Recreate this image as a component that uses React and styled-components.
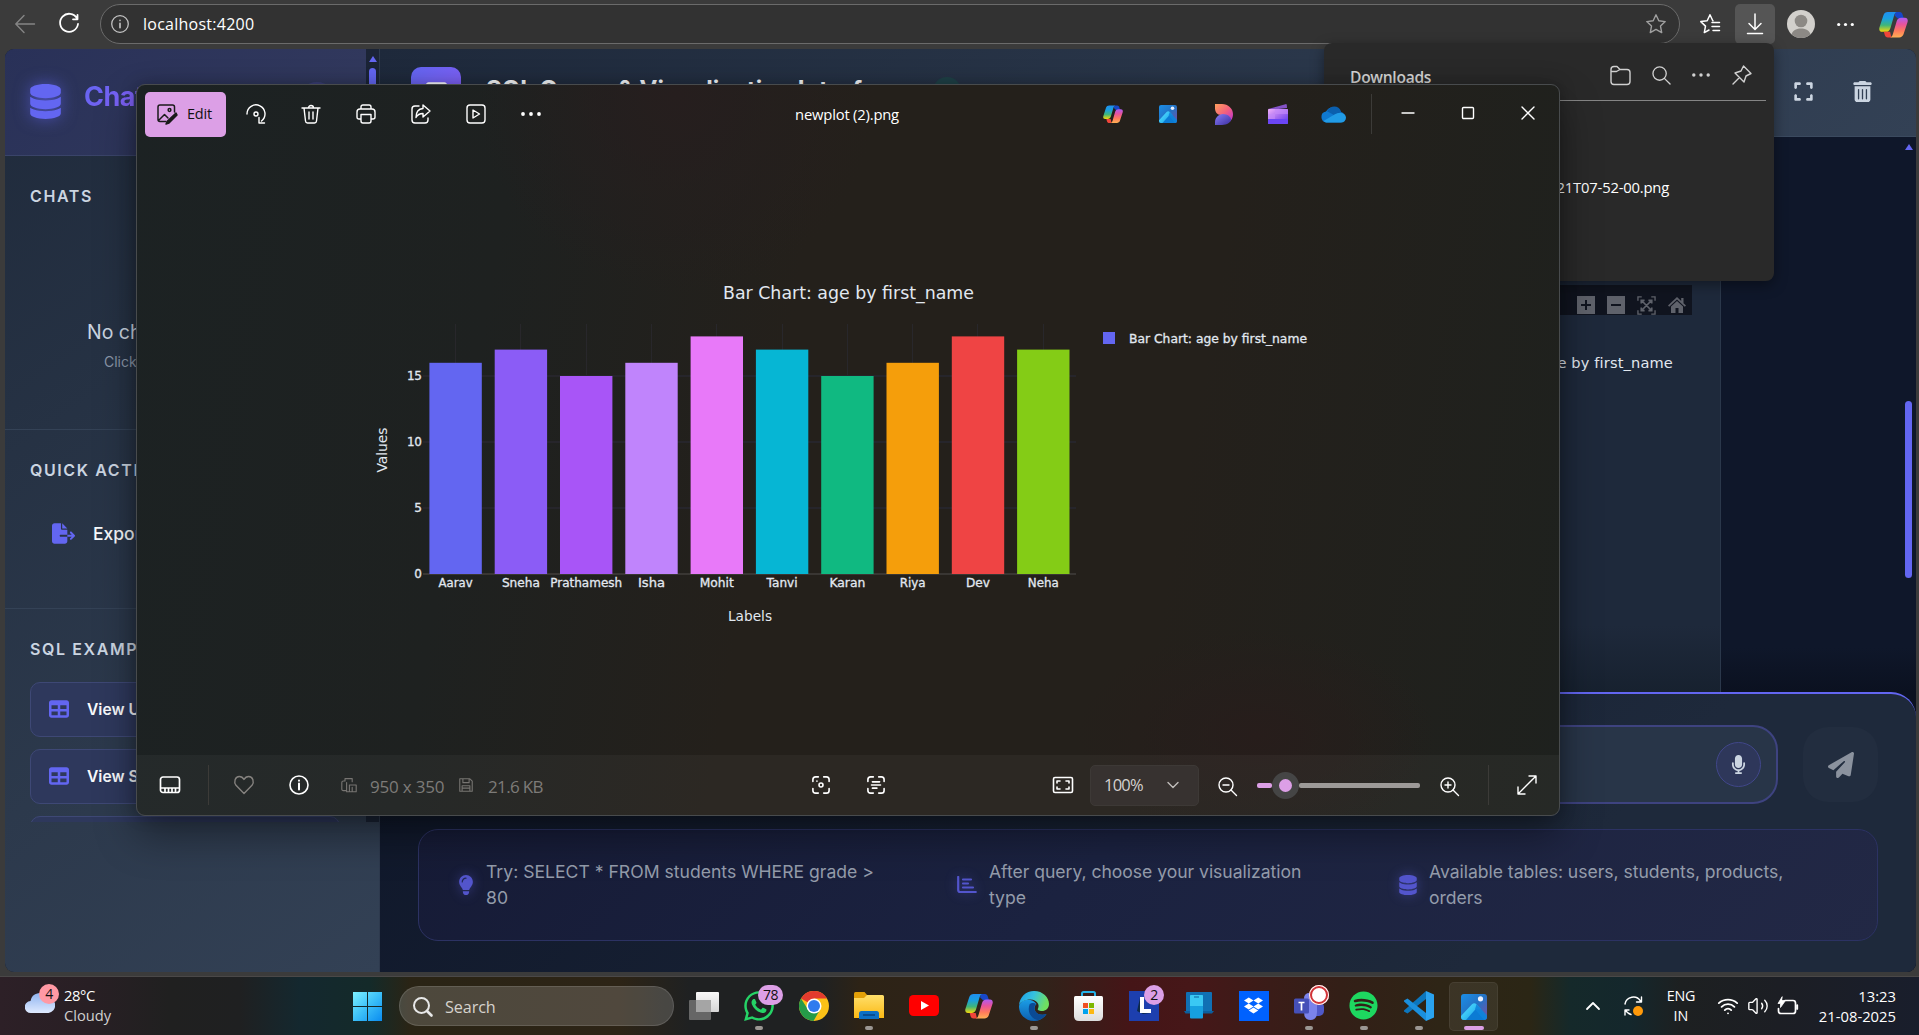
import React from "react";
import styled, { createGlobalStyle, css } from "styled-components";
import {
  FaDatabase, FaFileExport, FaTable, FaLightbulb, FaMicrophone, FaPaperPlane,
  FaExpand, FaTrashCan, FaWhatsapp, FaSpotify, FaDropbox,
} from "react-icons/fa6";
import { LuWifi, LuVolume2 } from "react-icons/lu";

const SEGOE = `"Open Sans", "Noto Sans", sans-serif`;
const INTER = `Inter, "Liberation Sans", sans-serif`;
const VERDANA = `"DejaVu Sans", Verdana, sans-serif`;

const GlobalStyle = createGlobalStyle`
  * { box-sizing: border-box; }
  body { margin: 0; background: #3b3b3b; overflow: hidden; font-family: ${SEGOE}; }
  svg { display: block; flex: none; }
`;

/* ---------- shared ---------- */
const Line = styled.svg.attrs({ fill: "none" })`
  width: ${(p) => p.$w || 20}px;
  height: ${(p) => p.$h || p.$w || 20}px;
  stroke: ${(p) => p.$c || "#fff"};
  stroke-width: ${(p) => p.$s || 1.4};
  stroke-linecap: round;
  stroke-linejoin: round;
  overflow: visible;
`;
const Cell = styled.div`
  width: ${(p) => p.$w || 55}px;
  margin-left: ${(p) => p.$ml || 0}px;
  flex: none;
  display: flex;
  align-items: center;
  justify-content: center;
`;
const Divider = styled.div`
  flex: none;
  width: 1px;
  height: 40px;
  margin-left: ${(p) => p.$ml || 0}px;
  background: #3c3b38;
`;
const Label = styled.span`
  font-size: ${(p) => p.$size || 15}px;
  font-weight: ${(p) => p.$weight || 400};
  letter-spacing: ${(p) => p.$ls || 0}px;
  color: ${(p) => p.$c || "#fff"};
  line-height: 20px;
  white-space: nowrap;
`;

/* ---------- shell ---------- */
const Desktop = styled.div`
  position: relative;
  width: 1919px;
  height: 1035px;
  overflow: hidden;
  display: flex;
  flex-direction: column;
`;
const Browser = styled.div`
  height: 976px;
  flex: none;
  display: flex;
  flex-direction: column;
  background: #3b3b3b;
  padding: 0 3px 4px 5px;
`;
const BrowserBar = styled.div`
  height: 49px;
  flex: none;
  display: flex;
  align-items: center;
  padding-bottom: 1px;
`;
const AddressBar = styled.div`
  width: 1580px;
  height: 40px;
  flex: none;
  margin-left: 7px;
  border: 1px solid #6b6b6b;
  border-radius: 20px;
  background: #323232;
  display: flex;
  align-items: center;
  padding: 0 13px 0 10px;
  gap: 14px;
`;
const Spacer = styled.div` flex: 1; `;
const DownloadButton = styled.div`
  width: 40px;
  height: 40px;
  flex: none;
  border-radius: 5px;
  background: #555;
  display: flex;
  align-items: center;
  justify-content: center;
`;

/* ---------- sidebar ---------- */
const Page = styled.div`
  flex: 1;
  display: flex;
  border-radius: 9px;
  overflow: hidden;
  background: #0f172a;
`;
const Sidebar = styled.aside`
  width: 375px;
  flex: none;
  border-right: 1px solid #2e3a4e;
  background: linear-gradient(145deg, #1f2a3b 0%, #334155 100%);
  font-family: ${INTER};
`;
const SidebarScroll = styled.div`
  height: 773px;
  overflow: hidden;
  display: flex;
`;
const SidebarBody = styled.div` width: 361px; flex: none; `;
const Track = styled.div`
  width: 13px;
  background: #1b2436;
  display: flex;
  flex-direction: column;
  align-items: center;
  padding-top: 7px;
`;
const ArrowUp = styled.div`
  width: 0;
  border: 4px solid transparent;
  border-top: 0;
  border-bottom: 6px solid #6366f1;
`;
const Thumb = styled.div`
  width: 7px;
  height: ${(p) => p.$h}px;
  margin-top: ${(p) => p.$mt}px;
  border-radius: 4px;
  background: #6366f1;
`;
const SidebarHeader = styled.div`
  height: 107px;
  border-bottom: 1px solid #3a4469;
  background: linear-gradient(135deg, #293158, #333a5e);
  display: flex;
  align-items: center;
  padding: 0 30px 2px 23px;
  color: #6366f1;
  > svg { filter: drop-shadow(0 0 8px rgba(99, 102, 241, 0.6)); }
`;
const Brand = styled.h2`
  margin: 0 0 10px 21px;
  font-size: 27px;
  font-weight: 700;
  letter-spacing: -0.5px;
  background: linear-gradient(135deg, #6366f1, #8b5cf6);
  background-clip: text;
  color: transparent;
`;
const RoundAdd = styled.div`
  width: 38px;
  height: 38px;
  margin-left: auto;
  border-radius: 50%;
  background: #3a3f77;
`;
const Section = styled.section`
  height: ${(p) => p.$h}px;
  border-bottom: 1px solid #344256;
  padding: 30px 26px 0 25px;
  white-space: nowrap;
`;
const SectionTitle = styled.h3`
  margin: 0;
  font-size: 16px;
  line-height: 20px;
  font-weight: 600;
  letter-spacing: 1.6px;
  color: #cbd5e1;
  text-transform: uppercase;
`;
const EmptyTitle = styled.p`
  margin: 114px 0 0 57px;
  font-size: 19.5px;
  line-height: 24px;
  color: #cbd5e1;
`;
const EmptyHint = styled.p`
  margin: 9px 0 0 74px;
  font-size: 14px;
  line-height: 18px;
  color: #8a96a8;
`;
const ExportRow = styled.div`
  margin: 42px 0 0 22px;
  display: flex;
  align-items: center;
  gap: 18px;
  font-size: 17.5px;
  font-weight: 500;
  line-height: 22px;
  color: #f8fafc;
  svg { color: #6366f1; }
`;
const ExampleButton = styled.div`
  height: 55px;
  margin-top: ${(p) => p.$mt}px;
  border: 1px solid #3e4875;
  border-radius: 10px;
  background: #2e385c;
  display: flex;
  align-items: center;
  padding: 0 0 1px 18px;
  gap: 18px;
  font-size: 15.6px;
  font-weight: 600;
  color: #f8fafc;
  svg { color: #6366f1; }
`;

/* ---------- main column ---------- */
const Main = styled.main`
  flex: 1;
  display: flex;
  flex-direction: column;
  font-family: ${INTER};
`;
const Header = styled.header`
  height: 88px;
  flex: none;
  border-bottom: 1px solid #3b4a5f;
  background: linear-gradient(135deg, #1e293b, #334155);
  display: flex;
  align-items: center;
  padding: 0 45px 2px 31px;
  color: #cbd5e1;
`;
const LogoTile = styled.div`
  width: 50px;
  height: 50px;
  border-radius: 10px;
  background: linear-gradient(135deg, #6366f1, #8b5cf6);
  display: flex;
  align-items: center;
  justify-content: center;
  color: #fff;
`;
const Title = styled.h1`
  margin: 0 0 4px 25px;
  font-size: 24px;
  line-height: 26px;
  font-weight: 700;
  color: #f8fafc;
`;
const StatusDot = styled.div`
  width: 28px;
  height: 28px;
  margin: 0 0 2px 29px;
  border-radius: 50%;
  background: #1f4147;
`;
const Messages = styled.div`
  height: 555px;
  flex: none;
  display: flex;
  background: linear-gradient(#0f172a 92%, #0b1120);
`;
const Bubble = styled.div`
  width: 1310px;
  margin-left: 31px;
  border: 1px solid #2b384b;
  border-width: 0 1px;
  background: linear-gradient(#1e293b 88%, #17212f);
  padding: 148px 28px 0 0;
  display: flex;
  flex-direction: column;
  align-items: flex-end;
`;
const ModeBar = styled.div`
  height: 30px;
  width: 240px;
  background: #10141f;
  display: flex;
  align-items: center;
  justify-content: flex-end;
  gap: 12px;
  padding: 10px 6px 0 0;
`;
const LegendText = styled.div`
  margin: 38px 19px 0 0;
  font: 14.6px/20px ${VERDANA};
  letter-spacing: 0.15px;
  color: #e2e8f0;
`;
const ChatTrack = styled.div`
  margin-left: auto;
  width: 15px;
  padding-top: 7px;
  display: flex;
  flex-direction: column;
  align-items: center;
`;
const Composer = styled.div`
  height: 280px;
  border-top: 2px solid #6366f1;
  border-radius: 25px 25px 0 0;
  background: linear-gradient(135deg, #0f172a, #1e293b 75%);
  padding: 31px 38px 0 38px;
`;
const ComposerBack = styled.div` background: #0b1120; `;
const InputRow = styled.div` display: flex; align-items: center; `;
const InputBox = styled.div`
  width: 1360px;
  height: 79px;
  flex: none;
  border: 2px solid #3e4380;
  border-radius: 25px;
  background: #283548;
  display: flex;
  align-items: center;
  justify-content: flex-end;
  padding-right: 15px;
`;
const MicButton = styled.div`
  width: 45px;
  height: 45px;
  border: 1px solid #41478a;
  border-radius: 50%;
  background: #2e375a;
  color: #cbd5e1;
  display: flex;
  align-items: center;
  justify-content: center;
`;
const SendButton = styled.div`
  width: 75px;
  height: 75px;
  flex: none;
  margin-left: 25px;
  border-radius: 25px;
  background: #222d3f;
  color: #8b929e;
  display: flex;
  align-items: center;
  justify-content: center;
`;
const Hints = styled.div`
  margin-top: 25px;
  height: 112px;
  border: 1px solid #2c3263;
  border-radius: 20px;
  background: linear-gradient(135deg, #161b36, #1b2240 45%, #222845);
  display: grid;
  grid-template-columns: 499px 442px 1fr;
  align-items: center;
  padding-left: 39px;
`;
const Hint = styled.div`
  display: flex;
  align-items: center;
  gap: ${(p) => p.$gap}px;
  font-size: 17.6px;
  line-height: 26px;
  letter-spacing: ${(p) => p.$ls || 0}px;
  color: #949cab;
  white-space: nowrap;
  svg { color: #5355cc; filter: drop-shadow(0 0 6px rgba(99, 102, 241, 0.4)); }
`;

/* ---------- downloads flyout ---------- */
const Downloads = styled.div`
  position: absolute;
  left: 1324px;
  top: 43px;
  width: 450px;
  height: 238px;
  border-radius: 8px;
  background: #292929;
  box-shadow: 0 4px 14px rgba(0, 0, 0, 0.4);
`;
const DownloadsHead = styled.div`
  height: 58px;
  margin: 0 8px;
  border-bottom: 1px solid #858585;
  display: flex;
  align-items: center;
  padding: 7px 4px 0 18px;
`;
const HeadText = styled.div` padding-top: 3px; `;
const FileName = styled.div`
  padding: 75px 105px 0 0;
  text-align: right;
`;

/* ---------- photo viewer ---------- */
const Viewer = styled.div`
  position: absolute;
  left: 136px;
  top: 84px;
  width: 1424px;
  height: 732px;
  border: 1px solid #484b4d;
  border-radius: 9px;
  overflow: hidden;
  background:
    radial-gradient(circle at 540px 10px, #261e1e 0, rgba(38, 30, 30, 0) 200px),
    radial-gradient(ellipse at 1120px 650px, #271d1b 0, rgba(39, 29, 27, 0) 180px),
    linear-gradient(100deg, #1c2223 0%, #1e2120 25%, #24201b 45%, #24201b 72%, #1e211e 100%);
`;
const ViewerShadow = styled.div`
  position: absolute;
  left: 136px;
  top: 84px;
  width: 1424px;
  height: 732px;
  border-radius: 9px;
  box-shadow: 0 20px 40px rgba(0, 0, 0, 0.38), 0 0 16px rgba(0, 0, 0, 0.25);
`;
const ViewerBar = styled.div`
  height: 60px;
  display: flex;
  align-items: center;
  padding: 0 0 2px 8px;
`;
const EditButton = styled.div`
  width: 81px;
  height: 45px;
  flex: none;
  border-radius: 5px;
  background: #dc9fe6;
  display: flex;
  align-items: center;
  padding-left: 12px;
  gap: 10px;
`;
const FileTitle = styled.div`
  flex: 1;
  padding-left: 51px;
  text-align: center;
`;
const Footer = styled.div`
  height: 60px;
  background: rgba(255, 255, 255, 0.04);
  display: flex;
  align-items: center;
`;
const Meta = styled.div`
  width: ${(p) => p.$w}px;
  flex: none;
  margin-left: ${(p) => p.$ml}px;
  padding-top: 3px;
`;
const ZoomSelect = styled.div`
  width: 109px;
  height: 41px;
  flex: none;
  border: 1px solid #3d3936;
  border-radius: 5px;
  background: #373230;
  display: flex;
  align-items: center;
  justify-content: space-between;
  padding: 0 19px 0 13px;
`;
const Slider = styled.div`
  width: 163px;
  height: 27px;
  flex: none;
  margin-left: 2px;
  display: flex;
  align-items: center;
`;
const Rail = styled.div`
  height: 5px;
  width: ${(p) => p.$w}px;
  border-radius: 2px;
  background: ${(p) => p.$c};
`;
const Knob = styled.div`
  width: 27px;
  height: 27px;
  flex: none;
  border-radius: 50%;
  border: 7px solid #454545;
  background: #dc9fe6;
`;

/* ---------- taskbar ---------- */
const Taskbar = styled.div`
  height: 59px;
  flex: none;
  border-top: 1px solid #4a4848;
  display: flex;
  align-items: center;
  padding: 0 23px 0 25px;
  background: linear-gradient(90deg,
    #2d2027 0, #281f24 90px, #202020 170px, #1f2021 240px, #14282f 300px, #142a29 370px,
    #2a2415 410px, #2d2416 620px, #1f2122 690px, #1f2122 820px, #2d2316 860px, #30231a 1040px,
    #451517 1130px, #461718 1190px, #3a1c18 1270px, #331f17 1340px, #2e2516 1440px, #2b2615 1530px,
    #15292a 1570px, #14272c 1630px, #1d2021 1680px, #1c1e24 1780px, #191e2c 1919px);
`;
const WeatherIcon = styled.div`
  position: relative;
  width: 39px;
  height: 40px;
  flex: none;
`;
const Stack = styled.div`
  display: flex;
  flex-direction: column;
  align-items: ${(p) => p.$align || "flex-start"};
  width: ${(p) => p.$w}px;
  flex: none;
  padding-bottom: ${(p) => p.$pb || 0}px;
`;
const Badge = styled.div`
  position: absolute;
  left: ${(p) => p.$x}px;
  top: ${(p) => p.$y}px;
  width: ${(p) => p.$w || 20}px;
  height: 20px;
  border-radius: 10px;
  background: ${(p) => p.$bg || "#dc9fe6"};
  color: #111;
  font-size: 14px;
  letter-spacing: -0.5px;
  line-height: 20px;
  text-align: center;
`;
const RecordBadge = styled(Badge)`
  background: #fff;
  box-shadow: inset 0 0 0 1px #fff, inset 0 0 0 3px #d13438;
`;
const SearchPill = styled.div`
  width: 275px;
  height: 40px;
  margin-left: 17px;
  flex: none;
  border-radius: 20px;
  border: 1px solid rgba(255, 255, 255, 0.12);
  background: rgba(255, 255, 255, 0.17);
  display: flex;
  align-items: center;
  padding: 2px 0 0 13px;
  gap: 12px;
`;
const Apps = styled.div` display: flex; margin-left: 2px; `;
const AppButton = styled.div`
  position: relative;
  width: 55px;
  height: 58px;
  display: flex;
  flex-direction: column;
  align-items: center;
  justify-content: flex-end;
`;
const AppFace = styled.div`
  width: 49px;
  height: ${(p) => (p.$active ? 49 : 51)}px;
  border-radius: 5px;
  display: flex;
  align-items: center;
  justify-content: center;
  ${(p) => p.$active && css`
    background: rgba(255, 255, 255, 0.07);
    box-shadow: inset 0 0 0 1px rgba(255, 255, 255, 0.06);
  `}
`;
const Indicator = styled.div`
  width: ${(p) => (p.$active ? 20 : 8)}px;
  height: 4px;
  margin: -5px 0 5px;
  border-radius: 2px;
  background: ${(p) => (p.$active ? "#dc9fe6" : p.$on ? "#9b9793" : "transparent")};
`;

/* ---------- logos ---------- */
const Gradient = ({ id, stops, x2 = 0, y2 = 1 }) => (
  <linearGradient id={id} x1="0" y1="0" x2={x2} y2={y2}>
    {stops.map((c, i) => <stop key={i} offset={i / (stops.length - 1)} stopColor={c} />)}
  </linearGradient>
);
const HiddenDefs = styled.svg` position: absolute; width: 0; height: 0; `;
const Defs = () => (
  <HiddenDefs>
    <defs>
      <Gradient id="cpA" stops={["#1f8ff0", "#1aa0e0", "#3fb67a", "#f5d90a"]} />
      <Gradient id="cpB" stops={["#b05cf0", "#e8539c", "#ff7a5c", "#ffb054"]} />
      <Gradient id="phBg" x2={1} stops={["#1b8fe8", "#2472c4", "#7a4fa3"]} />
      <Gradient id="phM" x2={1} y2={0.8} stops={["#5be0fb", "#38c4f6", "#1795e0"]} />
      <Gradient id="dsA" x2={1} stops={["#ffa05c", "#f4607c", "#b52de0"]} />
      <Gradient id="dsB" x2={1} stops={["#8a7cf8", "#3b2fa0"]} />
      <Gradient id="clip" x2={1} stops={["#f0b0fb", "#a66cf0", "#5a35ee"]} />
      <Gradient id="win" x2={1} stops={["#7df0ff", "#3cc0f8", "#0a8cf0"]} />
      <Gradient id="edgeTop" x2={1} y2={0.3} stops={["#1a9be6", "#35c1e0", "#6fe060"]} />
      <Gradient id="edgeBase" stops={["#1b9de6", "#0d60b0"]} />
      <Gradient id="folder" stops={["#ffdf6b", "#fbb914"]} />
      <Gradient id="bag" stops={["#ffffff", "#dddddd"]} />
      <Gradient id="cloudy" stops={["#8fb4f0", "#dfeaff"]} />
      <Gradient id="tv1" stops={["#f8f8f8", "#d6d6d6"]} />
    </defs>
  </HiddenDefs>
);

const Copilot = ({ w = 28 }) => (
  <svg width={w} height={w} viewBox="0 0 28 28">
    <path d="M16 2h4c1.500 0 2.300 1 2.800 2.500l1.200 3.800h-6l-3-3z" fill="#1747c8" />
    <path d="M8.500 2H17c-1.500.6-2 2-2.500 3.500L11 17.500c-.8 2.300-2 3.500-4.500 3.500H3C.8 21-.2 19.300.4 17L4.300 5C5 3 6.500 2 8.500 2z" fill="url(#cpA)" />
    <path d="M12 26.500H8.500C7 26.500 6 25.700 5.500 24l-.8-3h6z" fill="#f0453a" />
    <path d="M19.500 26.500H11c1.500-.6 2-2 2.500-3.500L17 11c.8-2.300 2-3.500 4.500-3.500H25c2.200 0 3.200 1.700 2.600 4L23.700 23.500c-.7 2-2.200 3-4.200 3z" fill="url(#cpB)" />
  </svg>
);
const PhotosLogo = ({ w = 18 }) => (
  <svg width={w} height={w} viewBox="0 0 26 26">
    <rect width="26" height="26" rx="3" fill="url(#phBg)" />
    <path d="M4 26 13.300 15q1.500-1.500 3 0L25.500 24q-1 2-2.500 2z" fill="#0b7bd4" />
    <path d="M0 22 11 10.200q2.300-2 4.500 0l4.500 5-2.500.3q-1.700-1.500-3.200 0L5 26H3a3 3 0 0 1-3-3z" fill="url(#phM)" />
    <path d="m15.500 10.200 10.500 11V23a3 3 0 0 1-3 3L14 15.200z" fill="#0d84dc" opacity=".9" />
    <circle cx="19.500" cy="4.800" r="2.600" fill="#e8f0ff" />
  </svg>
);
const DesignerLogo = () => (
  <svg width="19" height="21" viewBox="0 0 19 21">
    <path d="M0 0h7c6 0 11 4.500 11 10 0 4.500-2 7-5 9L11 11H6C2 11 0 8 0 4z" fill="url(#dsA)" />
    <path d="M0 21v-3c0-4 3.500-8 8-8s8 3 8 5.500S12 21 7 21z" fill="url(#dsB)" />
  </svg>
);
const ClipLogo = () => (
  <svg width="20" height="20" viewBox="0 0 20 20">
    <path d="M0 5 17.500.2a1 1 0 0 1 1.300.8L19 4 1 6z" fill="#8553c8" />
    <rect y="5" width="20" height="15" rx="1" fill="url(#clip)" />
    <path d="M0 10h7v5H0zM7 5h13v5H7z" fill="#c48bfa" opacity=".6" />
    <path d="M0 15h20v4a1 1 0 0 1-1 1H1a1 1 0 0 1-1-1z" fill="#6b45f5" />
  </svg>
);
const OneDriveLogo = () => (
  <svg width="25" height="17" viewBox="0 0 25 17">
    <path d="M5.500 16.500A5.500 5.500 0 0 1 5 5.600 8.500 8.500 0 0 1 20 6a5.400 5.400 0 0 1-.5 10.500z" fill="#0f78cf" />
    <path d="M6 5.300C9-1 18-1.500 20.200 6L13 9z" fill="#0b5fae" />
    <path d="M2.500 15 14 8.300c4-2.300 11-1.800 11 3.500a4.700 4.700 0 0 1-5 4.700H6c-1.500 0-2.700-.6-3.500-1.500z" fill="#219be6" />
  </svg>
);
const Windows = () => (
  <svg width="29" height="29" viewBox="0 0 29 29">
    <path d="M0 0h14v14H0zM15 0h14v14H15zM0 15h14v14H0zM15 15h14v14H15z" fill="url(#win)" />
  </svg>
);
const TaskView = () => (
  <svg width="30" height="28" viewBox="0 0 30 28">
    <rect x="7" width="23" height="20" rx="1" fill="url(#tv1)" />
    <rect y="8" width="22" height="20" rx="1" fill="#787878" opacity=".8" />
    <path d="M7 8h15v12H7z" fill="#a5a5a5" />
  </svg>
);
const Chrome = () => (
  <svg width="30" height="30" viewBox="0 0 30 30">
    <circle cx="15" cy="15" r="15" fill="#fbc117" />
    <path d="M15 15 2 7.500A15 15 0 0 1 28 7.500H15z" fill="#e33b2e" />
    <path d="M2 7.500A15 15 0 0 0 14.500 30l6.200-10.800L15 15 9 18.500z" fill="#259b48" />
    <circle cx="15" cy="15" r="7.500" fill="#fff" />
    <circle cx="15" cy="15" r="6" fill="#2f7bee" />
  </svg>
);
const Explorer = () => (
  <svg width="30" height="27" viewBox="0 0 30 27">
    <path d="M0 1.500Q0 0 1.500 0h9l3 3.500V9H0z" fill="#e3a008" />
    <path d="M0 6h10l3-3h15.500Q30 3 30 4.500V26H0z" fill="url(#folder)" />
    <path d="M5 27v-5.500Q5 19 7.500 19h15q2.500 0 2.500 2.500V27z" fill="#0d6fc4" />
    <path d="M9 23h12" stroke="#0a3f7c" strokeWidth="1.400" />
  </svg>
);
const YouTube = () => (
  <svg width="30" height="21" viewBox="0 0 30 21">
    <rect width="30" height="21" rx="4.500" fill="#f00" />
    <path d="m12 6 8 4.500-8 4.500z" fill="#fff" />
  </svg>
);
const Edge = () => (
  <svg width="30" height="30" viewBox="0 0 30 30">
    <path d="M0 15C0 24 7 30 15 30c6 0 10-3 12.500-7-4 1.500-9 1-11-2.500-2-3-.5-6.500 1-7.500C14 7 2 7 0 15z" fill="url(#edgeBase)" />
    <path d="M10.500 13.500C8 21 12 27.500 19 29.300c4-1.300 6.800-3.500 8.500-6.300-4.500 1.800-9 .5-11-2.500-2-2.700-1-6 .5-7.500-2-1.500-5.500-1-6.500.5z" fill="#0b4a94" />
    <path d="M0 14.500C.5 6 7 0 15 0c9 0 15 6.500 15 13 0 4.500-3.500 7-7 7-3 0-5-1-4-2.500C21 14 18 8.500 11.500 8.500 6 8.500 1 11 0 14.500z" fill="url(#edgeTop)" />
  </svg>
);
const Store = () => (
  <svg width="29" height="30" viewBox="0 0 29 30">
    <path d="M8 6V2.500Q8 1 9.500 1h10Q21 1 21 2.500V6" fill="none" stroke="#25b4ea" strokeWidth="2" />
    <path d="M0 6.500Q0 5 1.500 5h26Q29 5 29 6.500V25q0 5-5 5H5q-5 0-5-5z" fill="url(#bag)" />
    <path d="M9 12h5v5H9z" fill="#f04e23" /><path d="M15 12h5v5h-5z" fill="#7db700" />
    <path d="M9 18h5v5H9z" fill="#00a2ee" /><path d="M15 18h5v5h-5z" fill="#fcb813" />
  </svg>
);
const LTile = () => (
  <svg width="30" height="30" viewBox="0 0 30 30">
    <rect width="30" height="30" fill="#1d3fae" />
    <path d="m8 20 3-13v12h11v3l-8 1z" fill="#0d2a4a" />
    <path d="M13 6v14h9" fill="none" stroke="#fff" strokeWidth="4" />
  </svg>
);
const PhoneLink = () => (
  <svg width="30" height="27" viewBox="0 0 30 27">
    <rect x="2" width="26" height="20" rx="1" fill="#1070b4" />
    <path d="M0 19h30l-2 2.500H1.500z" fill="#0b5f9e" />
    <rect x="6" y="3" width="13" height="23.500" rx="1" fill="#16a0e0" />
    <path d="M6 4a1 1 0 0 1 1-1h11a1 1 0 0 1 1 1v10H6z" fill="#3ac8f4" />
    <path d="M10 5h5" stroke="#0b5f9e" />
  </svg>
);
const DropboxTile = styled.div`
  width: 30px;
  height: 30px;
  background: #0061fe;
  color: #fff;
  display: flex;
  align-items: center;
  justify-content: center;
`;
const Teams = () => (
  <svg width="30" height="30" viewBox="0 0 30 30">
    <circle cx="15" cy="7" r="5" fill="#7b83eb" />
    <rect x="17" y="11" width="13" height="14" rx="5" fill="#5059c9" />
    <path d="M10 11h13v10q0 8-6.500 8T10 21z" fill="#7b83eb" />
    <rect y="7.500" width="15" height="15" rx="1.500" fill="#4550b8" />
    <path d="M4.500 11.500h6M7.500 11.500v8" stroke="#fff" strokeWidth="1.700" />
  </svg>
);
const VSCode = () => (
  <svg width="30" height="30" viewBox="0 0 30 30">
    <path d="M22 0 30 3.500V26.500L22 30z" fill="#2aa3f0" />
    <path d="M22 0v8L3.500 22.500 0 20.500V19.500z" fill="#0c76bd" />
    <path d="M22 30v-8L3.500 7.500 0 9.500v1z" fill="#1b8fdc" />
  </svg>
);

/* ---------- chart ---------- */
const bars = [
  ["Aarav", 16, "#6366f1", 34], ["Sneha", 17, "#8b5cf6", 38], ["Prathamesh", 15, "#a855f7", 72],
  ["Isha", 16, "#c084fc", 27], ["Mohit", 18, "#e879f9", 34], ["Tanvi", 17, "#06b6d4", 31],
  ["Karan", 15, "#10b981", 36], ["Riya", 16, "#f59e0b", 26], ["Dev", 18, "#ef4444", 24], ["Neha", 17, "#84cc16", 31],
];
const ChartSvg = styled.svg`
  width: 1422px;
  height: 610px;
  font-family: ${VERDANA};
  text { fill: #e2e8f0; }
`;
const Small = styled.text`
  font-size: 12px;
  stroke: #e2e8f0;
  stroke-width: 0.3px;
`;
const Chart = () => (
  <ChartSvg viewBox="137 145 1422 610">
    {bars.map((b, i) => (
      <path key={b[0]} d={`M${455.5 + Math.round(i * 65.3)} 324V574`} stroke="#28272b" />
    ))}
    {[376, 442, 508].map((y) => <path key={y} d={`M423 ${y}H1076`} stroke="#26252b" strokeWidth="2" />)}
    <path d="M423 574H1076" stroke="#393633" strokeWidth="2" />
    {bars.map(([name, v, color, w], i) => (
      <g key={name}>
        <rect x={429.4 + i * 65.3} y={574 - v * 13.2} width="52.400" height={v * 13.2} fill={color} />
        <Small x={455.6 + i * 65.3} y="587" textAnchor="middle" textLength={w} lengthAdjust="spacingAndGlyphs">{name}</Small>
      </g>
    ))}
    {[[0, 578, 8], [5, 512, 8], [10, 446, 15], [15, 380, 15]].map(([t, y, w]) => (
      <Small key={t} x="422" y={y} textAnchor="end" textLength={w}>{t}</Small>
    ))}
    <text x="723" y="299" fontSize="17" textLength="251" lengthAdjust="spacingAndGlyphs">Bar Chart: age by first_name</text>
    <text x="750" y="621" fontSize="14" textAnchor="middle" textLength="44" lengthAdjust="spacingAndGlyphs">Labels</text>
    <text transform="translate(387 450) rotate(-90)" fontSize="14" textAnchor="middle" textLength="45">Values</text>
    <rect x="1103" y="332" width="12" height="12" fill="#6366f1" />
    <Small x="1129" y="343" textLength="178" lengthAdjust="spacingAndGlyphs">Bar Chart: age by first_name</Small>
  </ChartSvg>
);

const dots = (c = "#fff") => <g fill={c} stroke="none"><circle cx="2" cy="10" r="1.900" /><circle cx="10" cy="10" r="1.900" /><circle cx="18" cy="10" r="1.900" /></g>;

const taskApps = [
  { id: "view", icon: <TaskView /> },
  { id: "wa", icon: <FaWhatsapp size={34} color="#25d366" />, on: true, badge: <Badge $x={27} $y={8} $w={25}>78</Badge> },
  { id: "chrome", icon: <Chrome /> },
  { id: "files", icon: <Explorer />, on: true },
  { id: "yt", icon: <YouTube /> },
  { id: "copilot", icon: <Copilot w={28} /> },
  { id: "edge", icon: <Edge />, on: true },
  { id: "store", icon: <Store /> },
  { id: "l", icon: <LTile />, badge: <Badge $x={28} $y={8}>2</Badge> },
  { id: "phone", icon: <PhoneLink /> },
  { id: "dropbox", icon: <DropboxTile><FaDropbox size={19} /></DropboxTile> },
  { id: "teams", icon: <Teams />, on: true, badge: <RecordBadge $x={28} $y={8} /> },
  { id: "spotify", icon: <FaSpotify size={29} color="#1ed760" />, on: true },
  { id: "code", icon: <VSCode />, on: true },
  { id: "photos", icon: <PhotosLogo w={26} />, active: true },
];

const ModeIcon = ({ d }) => <svg width="18" height="18" viewBox="0 0 18 18"><path d={d} fill="#5f626b" fillRule="evenodd" /></svg>;

export default function App() {
  return (
    <Desktop>
      <GlobalStyle />
      <Defs />
      <Browser>
        <BrowserBar>
          <Cell $w={40}><Line $c="#858585"><path d="M19.500 10H1M9 1.500 .8 10 9 18.500" /></Line></Cell>
          <Cell $w={48}><Line $s={1.8}><path d="M18 4.500A9 9 0 1 0 19 10M18.500.800V5.300H14" /></Line></Cell>
          <AddressBar>
            <Line $w={18} $c="#c4c4c4" viewBox="0 0 20 20"><circle cx="10" cy="10" r="9.200" /><path d="M10 9.200v5M10 6v.2" strokeWidth="1.800" /></Line>
            <Label $size={16} $ls={0.25}>localhost:4200</Label>
            <Spacer />
            <Line $c="#a0a0a0"><path d="m10 .8 2.800 6 6.400.8-4.700 4.500 1.200 6.500L10 15.400l-5.700 3.200 1.200-6.500L.8 7.600l6.400-.8z" /></Line>
          </AddressBar>
          <Cell $w={50} $ml={5}>
            <Line><path d="M13 6.800h-.2L10 .8l-2.800 6-6.400.8 4.700 4.500-1.200 6.500L9 16M12 8.500h7.500M12 12.500h7.500M13 16.500h6.500" strokeWidth="1.500" /></Line>
          </Cell>
          <DownloadButton><Line $s={1.5}><path d="M10 0v15M4 9.500l6 6 6-6M2.500 19.500h15" /></Line></DownloadButton>
          <Cell $w={51}>
            <svg width="28" height="28" viewBox="0 0 28 28"><circle cx="14" cy="14" r="14" fill="#d2d0cc" /><circle cx="14" cy="11" r="6.300" fill="#8c8985" /><path d="M4.500 24.300C6 20 10 18.500 14 18.500s8 1.500 9.500 5.800A14 14 0 0 1 4.500 24.300z" fill="#8c8985" /></svg>
          </Cell>
          <Cell $w={38}><Line $w={17} viewBox="0 0 20 20">{dots()}</Line></Cell>
          <Cell $w={59}><Copilot w={29} /></Cell>
        </BrowserBar>
        <Page>
          <Sidebar>
            <SidebarScroll>
              <SidebarBody>
                <SidebarHeader>
                  <FaDatabase size={35} /><Brand>Chats</Brand><RoundAdd />
                </SidebarHeader>
                <Section $h={274}>
                  <SectionTitle>Chats</SectionTitle>
                  <EmptyTitle>No chats yet</EmptyTitle>
                  <EmptyHint>Click + to start</EmptyHint>
                </Section>
                <Section $h={179}>
                  <SectionTitle>Quick Actions</SectionTitle>
                  <ExportRow><FaFileExport size={23} />Export Chat</ExportRow>
                </Section>
                <Section $h={300}>
                  <SectionTitle>SQL Examples</SectionTitle>
                  <ExampleButton $mt={23}><FaTable size={20} />View Users</ExampleButton>
                  <ExampleButton $mt={12}><FaTable size={20} />View Students</ExampleButton>
                  <ExampleButton $mt={12} />
                </Section>
              </SidebarBody>
              <Track><ArrowUp /><Thumb $mt={6} $h={680} /></Track>
            </SidebarScroll>
          </Sidebar>
          <Main>
            <Header>
              <LogoTile><FaTable size={21} /></LogoTile>
              <Title>SQL Query &amp; Visualization Interface</Title>
              <StatusDot />
              <Spacer />
              <FaExpand size={21} />
              <Cell $w={18} $ml={39}><FaTrashCan size={21} /></Cell>
            </Header>
            <Messages>
              <Bubble>
                <ModeBar>
                  <ModeIcon d="M0 0h18v18H0zM8 4v4H4v2h4v4h2v-4h4V8h-4V4z" />
                  <ModeIcon d="M0 0h18v18H0zM4 8v2h10V8z" />
                  <svg width="19" height="19" viewBox="0 0 20 20" fill="none" stroke="#5f626b"><path d="M1 5V1h4M15 1h4v4M19 15v4h-4M5 19H1v-4" strokeWidth="1.400" /><path d="m5 5 10 10M15 5 5 15M4.500 8V4.500H8M12 4.500h3.500V8M15.500 12v3.500H12M8 15.500H4.500V12" strokeWidth="1.800" /></svg>
                  <ModeIcon d="M9 1 0 9.500l1.200 1.200L9 3.500l7.800 7.200L18 9.500l-2.500-2.300V2h-2.300v3zM9 5l-6 5.500V17h4.500v-5h3v5H15v-6.500z" />
                </ModeBar>
                <LegendText>Bar Chart: age by first_name</LegendText>
              </Bubble>
              <ChatTrack><ArrowUp /><Thumb $mt={251} $h={177} /></ChatTrack>
            </Messages>
            <ComposerBack>
              <Composer>
                <InputRow>
                  <InputBox><MicButton><FaMicrophone size={19} /></MicButton></InputBox>
                  <SendButton><FaPaperPlane size={26} /></SendButton>
                </InputRow>
                <Hints>
                  <Hint $gap={13}><Cell $w={15}><FaLightbulb size={20} /></Cell><span>Try: SELECT * FROM students WHERE grade &gt;<br />80</span></Hint>
                  <Hint $gap={12} $ls={-0.04}>
                    <svg width="20" height="18" viewBox="0 0 20 18" fill="none" stroke="currentColor" strokeWidth="2.200" strokeLinecap="round"><path d="M1.200 1v13q0 2 2 2h15.600M6 3.500h8M6 7.500h5M6 11.500h10" /></svg>
                    <span>After query, choose your visualization<br />type</span>
                  </Hint>
                  <Hint $gap={12} $ls={-0.04}><Cell $w={18}><FaDatabase size={20} /></Cell><span>Available tables: users, students, products,<br />orders</span></Hint>
                </Hints>
              </Composer>
            </ComposerBack>
          </Main>
        </Page>
      </Browser>

      <Downloads>
        <DownloadsHead>
          <HeadText><Label $size={15.6} $weight={600} $ls={-0.3} $c="#d6d6d6">Downloads</Label></HeadText>
          <Spacer />
          <Cell $w={41}><Line $w={21} $c="#d0d0d0" viewBox="0 0 21 20"><path d="M1 4q0-3 3-3h3l3 3h7q3 0 3 3v9q0 3-3 3H4q-3 0-3-3zM1 6h5.500L10 4" /></Line></Cell>
          <Cell $w={40}><Line $w={19} $c="#d0d0d0" viewBox="0 0 20 20"><circle cx="8" cy="8" r="7" /><path d="m13 13 6 6" /></Line></Cell>
          <Cell $w={40}><Line $w={18} viewBox="0 0 20 20">{dots("#d0d0d0")}</Line></Cell>
          <Cell $w={41}><Line $c="#d0d0d0"><path d="m11.500 1 7.500 7.500-5 2.500-2 6-9-9 6-2zM7.500 12.500 1 19" /></Line></Cell>
        </DownloadsHead>
        <FileName><Label $size={14.8} $ls={-0.2}>screenshot-2025-08-21T07-52-00.png</Label></FileName>
      </Downloads>

      <ViewerShadow />
      <Viewer>
        <ViewerBar>
          <EditButton>
            <Line $c="#1a1a1a" $s={1.5}><path d="M9 17.500H3Q1 17.500 1 15.500V3Q1 1 3 1h12.500q2 0 2 2v5M2 16l5.500-5.500L11 14" /><circle cx="12.500" cy="6" r="1.400" /><path d="m19 9-8.500 8-1.500 3 3-1 8-8z" fill="#1a1a1a" /></Line>
            <Label $size={14.5} $ls={-0.2} $c="#111">Edit</Label>
          </EditButton>
          <Cell $ml={2}><Line><path d="M1 10a9 9 0 1 1 14.500 7M13 13.500V19h5.500" /><circle cx="10" cy="10" r="2" /></Line></Cell>
          <Cell><Line><path d="M1 4h18M7.500 4a2.500 2.500 0 0 1 5 0M3 4l1.500 13q.2 2 2 2h7q1.800 0 2-2L17 4M8 8v7M12 8v7" /></Line></Cell>
          <Cell><Line><path d="M5 5V3q0-2 2-2h6q2 0 2 2v2M5 15H3q-2 0-2-2V8q0-3 3-3h12q3 0 3 3v5q0 2-2 2h-2M5 10.500h10V17q0 2-2 2H7q-2 0-2-2z" /></Line></Cell>
          <Cell><Line><path d="M8 2H4Q1 2 1 5v11q0 3 3 3h10q3 0 3-3v-2M12 1l7 6-7 6V9.500q-5 0-7 4Q5 5 12 4.500z" /></Line></Cell>
          <Cell><Line><rect x="1" y="1" width="18" height="18" rx="3" /><path d="M7 6v8l6.500-4z" /></Line></Cell>
          <Cell><Line>{dots()}</Line></Cell>
          <FileTitle><Label $size={14.8} $ls={-0.2}>newplot (2).png</Label></FileTitle>
          <Cell><Copilot w={20} /></Cell>
          <Cell><PhotosLogo w={18} /></Cell>
          <Cell $w={59}><DesignerLogo /></Cell>
          <Cell $w={48}><ClipLogo /></Cell>
          <Cell $w={62}><OneDriveLogo /></Cell>
          <Divider $ml={7} />
          <Cell $w={60} $ml={6}><Line $w={12}><path d="M0 5h12" /></Line></Cell>
          <Cell $w={60}><Line $w={12}><rect x=".5" y="-.5" width="11" height="11" rx="1" /></Line></Cell>
          <Cell $w={60}><Line $w={12}><path d="M0-1l12 12M12-1 0 11" /></Line></Cell>
          <Cell $w={1} />
        </ViewerBar>
        <Chart />
        <Footer>
          <Cell $w={65}><Line $s={1.7}><rect x="0.500" y="2" width="19" height="15.500" rx="2.500" /><path d="M1 13h18M5 13v4M8.500 13v4M12 13v4M15.500 13v4" /></Line></Cell>
          <Divider $ml={6} />
          <Cell $w={54} $ml={8}><Line $c="#85827f"><path d="M10 18.500 2 10.300C-.5 7 1 1.500 5.300 1.500c2.200 0 3.700 1.200 4.700 3 1-1.800 2.500-3 4.700-3C19 1.500 20.500 7 18 10.300z" /></Line></Cell>
          <Cell $w={55}><Line $s={1.6}><circle cx="10" cy="10" r="9" /><path d="M10 8.500v6M10 5.500v.3" strokeWidth="2" /></Line></Cell>
          <Cell $w={16} $ml={15}><Line $w={16} $c="#777572" viewBox="0 0 20 20"><path d="M7 17H3q-2 0-2-2V7q0-2 2-2h2V2h9v4M7 7v11M10.500 10H19v8.500h-8.500zM14 13v5.500M7 18.500h3" /></Line></Cell>
          <Meta $w={74} $ml={13}><Label $size={17} $ls={-0.2} $c="#7d7b78">950 x 350</Label></Meta>
          <Cell $w={14} $ml={15}><Line $w={14} $c="#777572" viewBox="0 0 18 18"><path d="M1 1h13l3 3v13H1zM5 1v5h8V1M4 17v-7h10v7M4 13h10" /></Line></Cell>
          <Meta $w={54} $ml={15}><Label $size={17} $ls={-0.65} $c="#7d7b78">21.6 KB</Label></Meta>
          <Cell $ml={251}><Line $w={18} viewBox="0 0 20 20" $s={1.8}><path d="M1 6V4q0-3 3-3h3M13 1h3q3 0 3 3v2M19 14v2q0 3-3 3h-3M7 19H4q-3 0-3-3v-2M5.500 5.500v.2" /><circle cx="10" cy="10" r="2.200" /></Line></Cell>
          <Cell><Line $w={18} viewBox="0 0 20 20" $s={1.8}><path d="M1 6V4q0-3 3-3h3M13 1h3q3 0 3 3v2M19 14v2q0 3-3 3h-3M7 19H4q-3 0-3-3v-2M6 6.500h8M5 10h10M6 13.500h5" /></Line></Cell>
          <Cell $w={54} $ml={133}><Line $s={1.6}><rect x=".5" y="2.500" width="19" height="15" rx="1.500" /><path d="M4 8V6h3M13 6h3v2M16 12v2h-3M7 14H4v-2" /></Line></Cell>
          <ZoomSelect>
            <Label $size={16.5} $ls={-0.8} $c="#d4d0ce">100%</Label>
            <Line $w={12} $c="#c0bdba"><path d="m1 3.500 5 5 5-5" /></Line>
          </ZoomSelect>
          <Cell $w={56}><Line $w={19}><circle cx="8" cy="9" r="7" /><path d="m13 14 5.500 5.500M5 9h6" /></Line></Cell>
          <Slider><Rail $w={15} $c="#dc9fe6" /><Knob /><Rail $w={121} $c="#9d9a98" /></Slider>
          <Cell $w={56} $ml={1}><Line $w={19}><circle cx="8" cy="9" r="7" /><path d="m13 14 5.500 5.500M5 9h6M8 6v6" /></Line></Cell>
          <Divider $ml={11} />
          <Cell $w={56} $ml={10}><Line><path d="M1 19 19 1M12 1h7v7M8 19H1v-7" /></Line></Cell>
        </Footer>
      </Viewer>

      <Taskbar>
        <WeatherIcon>
          <svg width="30" height="40" viewBox="0 0 30 40"><path d="M6 28a6 6 0 0 1-.5-12A9.500 9.500 0 0 1 23 12.500 7.800 7.800 0 0 1 23.500 28z" transform="translate(0 -1)" fill="url(#cloudy)" /></svg>
          <Badge $x={14} $y={-2} $bg="#ff99a4">4</Badge>
        </WeatherIcon>
        <Stack $w={289} $pb={2}>
          <Label $size={14.8} $ls={-0.4}>28°C</Label>
          <Label $size={14.7} $ls={0} $c="#d0d0d0">Cloudy</Label>
        </Stack>
        <Windows />
        <SearchPill>
          <Line $w={20} $c="#e8e8e8" $s={2}><circle cx="8.500" cy="8.500" r="7.500" /><path d="m14 14 4.500 4.500" strokeWidth="2.600" /></Line>
          <Label $size={16.2} $ls={-0.1} $c="#d6d3cd">Search</Label>
        </SearchPill>
        <Apps>
          {taskApps.map((a) => (
            <AppButton key={a.id}>
              <AppFace $active={a.active}>{a.icon}</AppFace>
              <Indicator $on={a.on} $active={a.active} />
              {a.badge}
            </AppButton>
          ))}
        </Apps>
        <Spacer />
        <Cell $w={40}><Line $w={14} $s={1.8}><path d="m1 10 6-6 6 6" /></Line></Cell>
        <Cell $w={40}><Line $w={20}><path d="M2 8a8.500 8.500 0 0 1 15.500-3M18.500 1v5h-5M8 18.500A8.500 8.500 0 0 1 2.500 14M2 19v-5h4" /><circle cx="15" cy="15" r="5" fill="#ff9a0a" stroke="none" /></Line></Cell>
        <Stack $w={56} $align="center"><Label $size={14.3} $ls={-0.2}>ENG</Label><Label $size={14.3}>IN</Label></Stack>
        <Cell $w={38}><LuWifi size={22} color="#fff" /></Cell>
        <Cell $w={22}><LuVolume2 size={22} strokeWidth={1.5} color="#fff" /></Cell>
        <Cell $w={37}><Line $w={21} $s={1.7} viewBox="0 0 21 20"><path d="M8 4h8q2.500 0 2.500 2.500v8Q18.500 17 16 17H4q-2.500 0-2.500-2.500V12M20.300 8.500v4" /><path d="m5 .5-4 6.500h2.500v4L8.500 4H5z" fill="#fff" strokeWidth=".8" /></Line></Cell>
        <Stack $w={90} $align="flex-end" $pb={1}><Label $size={14.8}>13:23</Label><Label $size={14.8}>21-08-2025</Label></Stack>
      </Taskbar>
    </Desktop>
  );
}
